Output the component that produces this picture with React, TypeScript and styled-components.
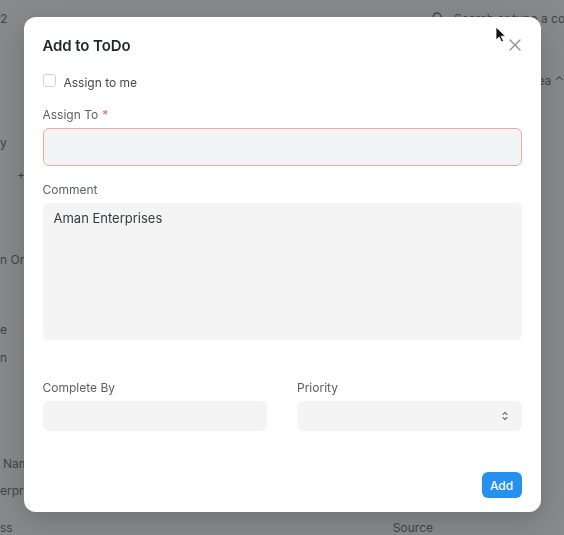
import React from "react";
import styled, { createGlobalStyle } from "styled-components";

const Global = createGlobalStyle`
  html, body { margin: 0; padding: 0; }
  body {
    width: 564px;
    height: 535px;
    overflow: hidden;
    font-family: Inter, "Noto Sans", sans-serif;
    background: #ffffff;
  }
  * { box-sizing: border-box; }
`;

/* ---------- background page ---------- */
const Page = styled.div`
  width: 564px;
  height: 535px;
  overflow: hidden;
  display: grid;
  grid-template-rows: 36px 34px 20px 42px 20px 12px 20px 65px 20px 50px 20px 8px 20px 86px 20px 7px 20px 20px 15px;
  color: #6a6e73;
  font-size: 13px;
  background: #f7f7f7;
`;

const BgRow = styled.div<{ $row: number }>`
  grid-row: ${(p) => p.$row};
  display: flex;
  align-items: center;
  justify-content: space-between;
  white-space: nowrap;
  font-size: 12px;
`;

const BgText = styled.span<{ $indent?: number }>`
  margin-left: ${(p) => p.$indent ?? 0}px;
`;

const Search = styled.div`
  display: flex;
  align-items: center;
  gap: 10px;
  width: 132px;
  overflow: hidden;
  color: #6a6e73;

  svg {
    flex-shrink: 0;
  }
`;

const Source = styled.span`
  margin-right: 131px;
`;

const Overlay = styled.div`
  position: fixed;
  inset: 0;
  background: rgba(24, 27, 31, 0.5);
  display: flex;
  justify-content: center;
  align-items: flex-start;
  padding-top: 17px;
`;

/* ---------- modal ---------- */
const Modal = styled.div`
  width: 517px;
  height: 495px;
  background: #ffffff;
  border-radius: 12px;
  box-shadow: 0 8px 28px rgba(0, 0, 0, 0.18);
  padding: 19px 19px 14px;
  display: flex;
  flex-direction: column;
`;

const Header = styled.div`
  display: flex;
  align-items: center;
  justify-content: space-between;
  height: 20px;
`;

const Title = styled.h3`
  margin: 0;
  font-size: 15px;
  line-height: 20px;
  font-weight: 600;
  color: #1f272e;
  letter-spacing: -0.1px;
`;

const CloseButton = styled.button`
  border: 0;
  background: transparent;
  padding: 0;
  width: 14px;
  height: 14px;
  margin-top: -3px;
  display: flex;
  align-items: center;
  justify-content: center;
  color: #8a8e93;
  cursor: pointer;
`;

const CheckRow = styled.label`
  margin-top: 18px;
  height: 16px;
  display: flex;
  align-items: center;
  gap: 8px;
  font-size: 12px;
  color: #42474c;
`;

const Box = styled.span`
  width: 13px;
  height: 13px;
  border: 1px solid #cfd3d7;
  border-radius: 3px;
  background: #ffffff;
  margin-top: -3px;
`;

const Field = styled.div<{ $top: number }>`
  margin-top: ${(p) => p.$top}px;
  display: flex;
  flex-direction: column;
  gap: 5px;
`;

const Label = styled.div`
  font-size: 12px;
  line-height: 16px;
  color: #5c6166;
`;

const Required = styled.span`
  color: #e5645a;
  margin-left: 4px;
`;

const Control = styled.div<{ $height: number; $error?: boolean }>`
  height: ${(p) => p.$height}px;
  border-radius: 6px;
  background: ${(p) => (p.$error ? "#f3f4f6" : "#f4f4f4")};
  border: 1px solid ${(p) => (p.$error ? "#eeaaa2" : "transparent")};
`;

const TextArea = styled.div`
  height: 137px;
  border-radius: 6px;
  background: #f4f4f4;
  padding: 6px 11px;
  font-size: 13px;
  line-height: 18px;
  color: #343a40;
`;

const Columns = styled.div`
  margin-top: 40px;
  display: grid;
  grid-template-columns: 1fr 1fr;
  column-gap: 30px;
`;

const SelectBox = styled(Control)`
  display: flex;
  align-items: center;
  justify-content: flex-end;
  padding-right: 12px;
  color: #6f7479;
`;

const Footer = styled.div`
  margin-top: auto;
  display: flex;
  justify-content: flex-end;
`;

const PrimaryButton = styled.button`
  border: 0;
  height: 26px;
  width: 40px;
  border-radius: 6px;
  background: #2490ef;
  color: #ffffff;
  font-family: inherit;
  font-size: 12px;
  font-weight: 500;
  cursor: pointer;
`;

const Cursor = styled.svg`
  position: fixed;
  left: 495px;
  top: 26px;
`;

const SearchIcon = () => (
  <svg width="12" height="12" viewBox="0 0 12 12" fill="none" stroke="currentColor" strokeWidth="1.3">
    <circle cx="5" cy="5" r="4" />
    <path d="M8 8l3 3" />
  </svg>
);

export default function App() {
  return (
    <>
      <Global />
      <Page>
        <BgRow $row={1}>
          <BgText>2</BgText>
          <Search>
            <SearchIcon />
            <span>Search or type a command</span>
          </Search>
        </BgRow>
        <BgRow $row={3}>
          <span />
          <BgText>Tea ⌃</BgText>
        </BgRow>
        <BgRow $row={5}>
          <BgText>y</BgText>
        </BgRow>
        <BgRow $row={7}>
          <BgText $indent={17}>+</BgText>
        </BgRow>
        <BgRow $row={9}>
          <BgText>n Org</BgText>
        </BgRow>
        <BgRow $row={11}>
          <BgText>e</BgText>
        </BgRow>
        <BgRow $row={13}>
          <BgText>n</BgText>
        </BgRow>
        <BgRow $row={15}>
          <BgText $indent={3}>Nam</BgText>
        </BgRow>
        <BgRow $row={17}>
          <BgText>erpri</BgText>
        </BgRow>
        <BgRow $row={19}>
          <BgText>ss</BgText>
          <Source>Source</Source>
        </BgRow>
      </Page>

      <Overlay>
        <Modal>
          <Header>
            <Title>Add to ToDo</Title>
            <CloseButton aria-label="Close">
              <svg width="12" height="12" viewBox="0 0 12 12" fill="none" stroke="currentColor" strokeWidth="1.3" strokeLinecap="round">
                <path d="M1 1l10 10M11 1L1 11" />
              </svg>
            </CloseButton>
          </Header>

          <CheckRow>
            <Box />
            <span>Assign to me</span>
          </CheckRow>

          <Field $top={17}>
            <Label>
              Assign To<Required>*</Required>
            </Label>
            <Control $height={38} $error />
          </Field>

          <Field $top={16}>
            <Label>Comment</Label>
            <TextArea>Aman Enterprises</TextArea>
          </Field>

          <Columns>
            <Field $top={0}>
              <Label>Complete By</Label>
              <Control $height={30} />
            </Field>
            <Field $top={0}>
              <Label>Priority</Label>
              <SelectBox $height={30}>
                <svg width="8" height="12" viewBox="0 0 8 12" fill="none" stroke="currentColor" strokeWidth="1.1" strokeLinecap="round" strokeLinejoin="round">
                  <path d="M2 4.5L4 2.5L6 4.5" />
                  <path d="M2 7.5L4 9.5L6 7.5" />
                </svg>
              </SelectBox>
            </Field>
          </Columns>

          <Footer>
            <PrimaryButton>Add</PrimaryButton>
          </Footer>
        </Modal>
      </Overlay>

      <Cursor width="12" height="18" viewBox="0 0 12 18">
        <path d="M1 1v13l3.2-3 2.3 5 2-1-2.3-4.8H10.5z" fill="#111" stroke="#fff" strokeWidth="0.8" />
      </Cursor>
    </>
  );
}
